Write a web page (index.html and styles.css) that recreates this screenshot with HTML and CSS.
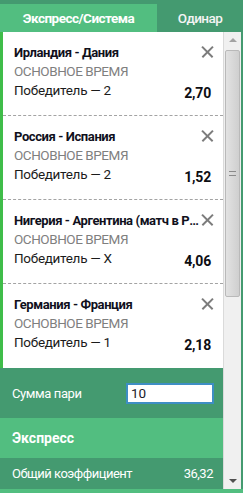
FILE: index.html
```html
<!DOCTYPE html>
<html lang="ru">
<head>
    <meta charset="UTF-8">
    <meta name="viewport" content="width=device-width, initial-scale=1.0">
    <title>Купон</title>
    <link rel="stylesheet" href="styles.css">
</head>
<body>

<div class="slip">
    <div class="tabs">
        <div class="tab active">Экспресс/Система</div>
        <div class="tab">Одинар</div>
    </div>

    <div class="slip-body">
        <div class="pane">
            <div class="bets">
                <div class="bet">
                    <div class="bet-head">
                        <span class="bet-title">Ирландия - Дания</span>
                        <span class="bet-close"></span>
                    </div>
                    <div class="bet-period">ОСНОВНОЕ ВРЕМЯ</div>
                    <div class="bet-row">
                        <span class="bet-outcome">Победитель — 2</span>
                        <span class="bet-odds">2,70</span>
                    </div>
                </div>
                <div class="bet">
                    <div class="bet-head">
                        <span class="bet-title">Россия - Испания</span>
                        <span class="bet-close"></span>
                    </div>
                    <div class="bet-period">ОСНОВНОЕ ВРЕМЯ</div>
                    <div class="bet-row">
                        <span class="bet-outcome">Победитель — 2</span>
                        <span class="bet-odds">1,52</span>
                    </div>
                </div>
                <div class="bet">
                    <div class="bet-head">
                        <span class="bet-title">Нигерия - Аргентина (матч в России)</span>
                        <span class="bet-close"></span>
                    </div>
                    <div class="bet-period">ОСНОВНОЕ ВРЕМЯ</div>
                    <div class="bet-row">
                        <span class="bet-outcome">Победитель — X</span>
                        <span class="bet-odds">4,06</span>
                    </div>
                </div>
                <div class="bet">
                    <div class="bet-head">
                        <span class="bet-title">Германия - Франция</span>
                        <span class="bet-close"></span>
                    </div>
                    <div class="bet-period">ОСНОВНОЕ ВРЕМЯ</div>
                    <div class="bet-row">
                        <span class="bet-outcome">Победитель — 1</span>
                        <span class="bet-odds">2,18</span>
                    </div>
                </div>
            </div>

            <div class="stake">
                <span>Сумма пари</span>
                <input class="stake-input" type="text" value="10">
            </div>

            <div class="express-title">Экспресс</div>

            <div class="express-total">
                <span>Общий коэффициент</span>
                <span>36,32</span>
            </div>
        </div>

        <div class="rail">
            <span class="rail-arrow up"></span>
            <div class="rail-track">
                <div class="rail-thumb"><span class="grip"></span></div>
            </div>
            <span class="rail-arrow down"></span>
        </div>
    </div>

    <div class="slip-foot"></div>
</div>

</body>
</html>
```

FILE: styles.css
```css
* {
    box-sizing: border-box;
}

body {
    margin: 0;
    font-family: Roboto, "Liberation Sans", sans-serif;
    background-color: #449a70;
}

.slip {
    width: 243px;
    height: 493px;
    display: flex;
    flex-direction: column;
    background-color: #449a70;
    padding-top: 4px;
}

/* --- вкладки --- */
.tabs {
    display: flex;
    height: 28px;
}

.tab {
    flex: 1;
    display: flex;
    align-items: center;
    justify-content: center;
    color: #f4f4f4;
    font-size: 13.5px;
    font-weight: 500;
    letter-spacing: -0.6px;
    background-color: #449a70;
}

.tab.active {
    flex: 0 0 157px;
    background-color: #52be80;
    color: #fff;
    font-weight: 700;
    letter-spacing: -0.5px;
}

.slip-body {
    flex: 1;
    display: flex;
    padding-right: 2px;
    min-height: 0;
}

.pane {
    width: 223px;
    display: flex;
    flex-direction: column;
}

/* --- список ставок --- */
.bets {
    height: 336px;
    background-color: #fff;
    border-left: 3px solid #3fbd49;
    overflow: hidden;
}

.bet {
    height: 84px;
    padding: 11px 12px 0 11px;
    border-bottom: 1px dashed #a3a3a3;
    font-size: 13.5px;
    line-height: 19px;
    letter-spacing: -0.45px;
}

.bet:last-child {
    border-bottom: none;
}

.bet-head {
    display: flex;
    align-items: center;
}

.bet-title {
    flex: 1;
    min-width: 0;
    font-weight: 700;
    font-size: 13px;
    letter-spacing: -0.4px;
    color: #10101c;
    white-space: nowrap;
    overflow: hidden;
    text-overflow: ellipsis;
}

.bet-close {
    position: relative;
    flex: 0 0 12px;
    height: 12px;
    margin: -2px -2px 0 2px;
}

.bet-close::before,
.bet-close::after {
    content: "";
    position: absolute;
    left: -1px;
    top: 5px;
    width: 15px;
    height: 1.5px;
    background-color: #7c7c7c;
    transform: rotate(45deg);
}

.bet-close::after {
    transform: rotate(-45deg);
}

.bet-period {
    color: #7f7f7f;
}

.bet-row {
    display: flex;
    justify-content: space-between;
    color: #1b1b1b;
}

.bet-outcome {
    letter-spacing: -0.3px;
}

.bet-odds {
    font-weight: 700;
    font-size: 14px;
    letter-spacing: -0.2px;
    color: #0d0d12;
    padding-top: 3px;
}

/* --- нижние блоки --- */
.stake {
    height: 50px;
    display: flex;
    align-items: center;
    justify-content: space-between;
    padding: 0 9px 0 12px;
    color: #fff;
    font-size: 13px;
    letter-spacing: -0.4px;
}

.stake-input {
    width: 88px;
    height: 21px;
    border: 2px solid #3e8ec4;
    padding: 0 3px;
    font-family: Roboto, "Liberation Sans", sans-serif;
    font-size: 13.5px;
    color: #1a1a2a;
    outline: none;
}

.express-title {
    height: 40px;
    display: flex;
    align-items: center;
    padding-left: 12px;
    background-color: #52be80;
    color: #fff;
    font-weight: 700;
    font-size: 14px;
}

.express-total {
    height: 31px;
    display: flex;
    align-items: center;
    justify-content: space-between;
    padding: 0 10px 0 12px;
    color: #fff;
    font-size: 13px;
    letter-spacing: -0.5px;
}

/* --- полоса прокрутки --- */
.rail {
    width: 18px;
    border-left: 1px solid #dadada;
    background-color: #f0f0f0;
    display: flex;
    flex-direction: column;
    align-items: center;
}

.rail-arrow {
    width: 0;
    height: 4px;
    flex: 0 0 4px;
    border-left: 4px solid transparent;
    border-right: 4px solid transparent;
}

.rail-arrow.up {
    border-bottom: 4px solid #a3a3a3;
    margin: 6px 0 8px;
}

.rail-arrow.down {
    border-top: 4px solid #505050;
    margin: 8px 0 6px;
}

.rail-track {
    flex: 1;
    width: 100%;
    padding: 0 1px;
}

.rail-thumb {
    height: 247px;
    border: 1px solid #b9b9b9;
    border-radius: 2px;
    background: linear-gradient(to right, #e2e2e2, #cfcfcf);
    display: flex;
    align-items: center;
    justify-content: center;
}

.grip {
    width: 7px;
    height: 5px;
    border-top: 1px solid #8a8a8a;
    border-bottom: 1px solid #8a8a8a;
}

.slip-foot {
    height: 4px;
    background-color: #52be80;
}
```
